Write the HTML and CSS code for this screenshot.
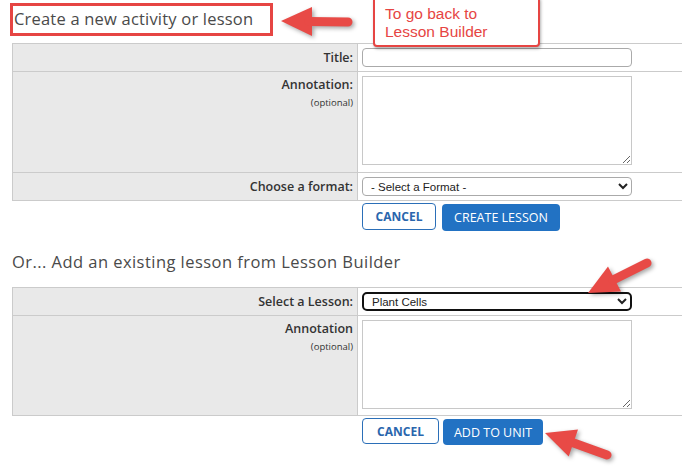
FILE: index.html
```html
<!DOCTYPE html>
<html lang="en">
<head>
    <meta charset="UTF-8">
    <meta name="viewport" content="width=device-width, initial-scale=1.0">
    <title>Add Activity</title>
    <link rel="stylesheet" href="styles.css">
</head>
<body>

    <div class="page">
        <h2 class="heading boxed">Create a new activity or lesson</h2>

        <table class="form-table upper">
            <tr class="row-short">
                <th>Title:</th>
                <td><input type="text" class="field"></td>
            </tr>
            <tr class="row-tall">
                <th class="top">Annotation:<small>(optional)</small></th>
                <td class="top"><textarea class="area"></textarea></td>
            </tr>
            <tr class="row-short">
                <th>Choose a format:</th>
                <td>
                    <select class="field select">
                        <option>- Select a Format -</option>
                    </select>
                </td>
            </tr>
        </table>

        <div class="actions">
            <button class="btn btn-outline">CANCEL</button>
            <button class="btn btn-primary wide">CREATE LESSON</button>
        </div>

        <h2 class="heading second">Or... Add an existing lesson from Lesson Builder</h2>

        <table class="form-table lower">
            <tr class="row-short">
                <th>Select a Lesson:</th>
                <td>
                    <select class="field select focused">
                        <option>Plant Cells</option>
                    </select>
                </td>
            </tr>
            <tr class="row-tall2">
                <th class="top">Annotation<small>(optional)</small></th>
                <td class="top"><textarea class="area"></textarea></td>
            </tr>
        </table>

        <div class="actions second-actions">
            <button class="btn btn-outline cancel2">CANCEL</button>
            <button class="btn btn-primary unit">ADD TO UNIT</button>
        </div>

        <div class="callout">To go back to<br>Lesson Builder</div>

        <svg class="arrows" width="682" height="468" viewBox="0 0 682 468">
            <!-- left arrow to heading -->
            <polygon points="281,21 312,7 312,36" />
            <line x1="309" y1="21.5" x2="348" y2="22" />
            <!-- arrow to lesson select -->
            <polygon points="588,293 621,291.6 608,266.5" />
            <line x1="613" y1="280" x2="647" y2="263" />
            <!-- arrow to add to unit -->
            <polygon points="545,433 568.7,456.5 578,429.5" />
            <line x1="571" y1="442" x2="607" y2="455" />
        </svg>
    </div>

</body>
</html>
```

FILE: styles.css
```css
body {
    margin: 0;
    padding: 0;
    background: #fff;
    font-family: "Open Sans", Arial, sans-serif;
    overflow: hidden;
}

.page {
    position: relative;
    width: 682px;
    height: 468px;
    overflow: hidden;
}

.heading {
    margin: 0;
    font-weight: 400;
    font-size: 16.5px;
    color: #4a4a4a;
    letter-spacing: 0.2px;
}

.boxed {
    display: block;
    margin: 3px 0 0 10px;
    padding: 1px 4px 0 1px;
    width: 252px;
    height: 26px;
    border: 3px solid #e64543;
    line-height: 24px;
}

.second {
    margin: 19px 0 0 12px;
    letter-spacing: 0.45px;
    line-height: 24px;
}

.form-table {
    margin: 4px 0 0 12px;
    width: 720px;
    border-collapse: collapse;
}

.form-table.upper {
    margin-top: 7px;
}

.form-table.lower {
    margin-top: 13px;
}

.form-table + .actions {
    margin-top: 2px;
}

.form-table th,
.form-table td {
    border: 1px solid #cbcbcb;
    padding: 0 4px;
    vertical-align: middle;
}

.form-table th {
    width: 336px;
    background: #e9e9e9;
    text-align: right;
    font-size: 12.5px;
    font-weight: 600;
    color: #333;
}

.form-table th small {
    display: block;
    font-size: 9.5px;
    font-weight: 400;
    line-height: 14px;
    margin-top: 2px;
}

.form-table .top {
    vertical-align: top;
    padding-top: 4px;
}

.form-table th.top {
    padding-top: 4px;
    line-height: 18px;
}

.row-short {
    height: 28px;
}

.row-tall {
    height: 101px;
}

.row-tall2 {
    height: 100px;
}

.field {
    display: block;
    box-sizing: border-box;
    width: 270px;
    height: 19px;
    border: 1px solid #aaa;
    border-radius: 4px;
    background: #fff;
    padding: 0 6px;
    font-family: "Liberation Sans", Arial, sans-serif;
    font-size: 11.5px;
    color: #222;
}

.select {
    padding: 0 4px;
}

.focused {
    border: 2px solid #111;
    border-radius: 5px;
}

.area {
    display: block;
    box-sizing: border-box;
    width: 270px;
    height: 89px;
    border: 1px solid #c8c8c8;
    resize: vertical;
    margin: 0;
}

.actions {
    display: flex;
    gap: 6px;
    padding-left: 362px;
}

.btn {
    box-sizing: border-box;
    height: 27px;
    border-radius: 4px;
    font-family: "Open Sans", Arial, sans-serif;
    font-size: 12px;
    cursor: pointer;
    padding: 0;
}

.btn-outline {
    width: 74px;
    background: #fff;
    border: 1px solid #2b6fb8;
    color: #2a66ad;
    font-weight: 700;
}

.btn-primary {
    background: #2272c3;
    border: none;
    color: #fff;
    font-weight: 500;
    font-size: 12.5px;
}

.wide {
    width: 118px;
    margin-top: 1px;
}

.second-actions {
    margin-top: 9px;
}

.cancel2 {
    width: 77px;
    height: 26px;
}

.unit {
    width: 100px;
    height: 26px;
    margin-top: 1px;
    margin-left: -2px;
}

.callout {
    position: absolute;
    left: 373px;
    top: -4px;
    box-sizing: border-box;
    width: 167px;
    height: 51px;
    padding: 7px 10px 0 10px;
    border: 2px solid #e64543;
    border-radius: 4px;
    background: #fff;
    box-shadow: 1px 2px 3px rgba(0, 0, 0, 0.3);
    font-family: "Liberation Sans", Arial, sans-serif;
    font-size: 15.5px;
    line-height: 18px;
    color: #e64543;
}

.arrows {
    position: absolute;
    left: 0;
    top: 0;
    pointer-events: none;
    filter: drop-shadow(2px 2px 2px rgba(0, 0, 0, 0.35));
}

.arrows polygon {
    fill: #e84a46;
}

.arrows line {
    stroke: #e84a46;
    stroke-width: 9;
    stroke-linecap: round;
}
```
